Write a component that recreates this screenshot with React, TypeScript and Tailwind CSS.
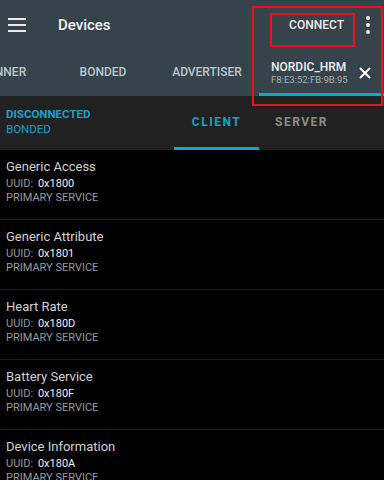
import { X } from "lucide-react";

const services = [
  { name: "Generic Access", uuid: "0x1800" },
  { name: "Generic Attribute", uuid: "0x1801" },
  { name: "Heart Rate", uuid: "0x180D" },
  { name: "Battery Service", uuid: "0x180F" },
  { name: "Device Information", uuid: "0x180A" },
];

export default function App() {
  return (
    <div
      className="relative w-[384px] h-[480px] overflow-hidden bg-black"
      style={{ fontFamily: "Roboto, 'Noto Sans', sans-serif" }}
    >
      {/* toolbar + device tabs */}
      <div className="bg-[#36434b]">
        <div className="flex h-[50px] items-center">
          <div className="flex w-[58px] pl-[8px]">
            <div className="flex flex-col gap-[4px]">
              <span className="block h-[2px] w-[18px] bg-[#e8eaeb]" />
              <span className="block h-[2px] w-[18px] bg-[#e8eaeb]" />
              <span className="block h-[2px] w-[18px] bg-[#e8eaeb]" />
            </div>
          </div>
          <div className="flex-1 text-[15px] font-medium text-[#f2f2f2]">Devices</div>
          <div className="pr-[22px] text-[12px] font-medium text-[#eeeeee]">CONNECT</div>
          <div className="flex flex-col items-center gap-[3px] pr-[14px]">
            <span className="block h-[4px] w-[4px] rounded-full bg-[#eeeeee]" />
            <span className="block h-[4px] w-[4px] rounded-full bg-[#eeeeee]" />
            <span className="block h-[4px] w-[4px] rounded-full bg-[#eeeeee]" />
          </div>
        </div>
        <div className="flex h-[46px] overflow-hidden">
          <div className="ml-[-53px] flex">
            <div className="flex w-[104px] shrink-0 items-center justify-center pb-[2px] text-[12px] font-medium text-[#bfc6ca]">SCANNER</div>
            <div className="flex w-[104px] shrink-0 items-center justify-center pb-[2px] text-[12px] font-medium text-[#bfc6ca]">BONDED</div>
            <div className="flex w-[104px] shrink-0 items-center justify-center pb-[2px] text-[12px] font-medium text-[#bfc6ca]">ADVERTISER</div>
          </div>
          <div className="flex w-[125px] shrink-0 flex-col border-b-[3px] border-[#11a6cf]">
            <div className="flex flex-1 items-center pl-[12px] pr-[10px] pt-[2px]">
              <div className="flex-1 leading-none">
                <div className="text-[12px] font-medium text-[#f0f0f0]">NORDIC_HRM</div>
                <div className="mt-[2px] text-[9.5px] text-[#a9b0b4]">F8:E3:52:FB:9B:95</div>
              </div>
              <X className="h-[18px] w-[18px] text-white" strokeWidth={2.5} />
            </div>
          </div>
        </div>
      </div>

      {/* connection + client/server */}
      <div className="flex h-[54px] bg-[#212121]">
        <div className="flex w-[174px] flex-col justify-center pl-[6px] pb-[3px] leading-[15px]">
          <div className="text-[11.5px] font-bold text-[#1aa0c6]">DISCONNECTED</div>
          <div className="text-[11.5px] text-[#1aa0c6]">BONDED</div>
        </div>
        <div className="flex w-[85px] items-center justify-center border-b-[3px] border-[#11a6cf] text-[12px] font-bold tracking-[1.5px] text-[#1aa0c6]">
          CLIENT
        </div>
        <div className="flex w-[85px] items-center justify-center border-b-[3px] border-transparent text-[12px] font-bold tracking-[1.5px] text-[#8c8c8c]">
          SERVER
        </div>
      </div>

      {/* services */}
      <div className="flex flex-col">
        {services.map((s) => (
          <div key={s.uuid} className="h-[70px] border-b border-[#1e1e1e] pl-[6px] pt-[8px]">
            <div className="text-[13px] leading-[18px] text-[#d2d2d2]">{s.name}</div>
            <div className="text-[11px] leading-[15px] text-[#9a9a9a]">
              UUID: <span className="ml-[2px] text-[#f0f0f0]">{s.uuid}</span>
            </div>
            <div className="text-[11px] leading-[14px] text-[#9a9a9a]">PRIMARY SERVICE</div>
          </div>
        ))}
      </div>

      {/* red highlight boxes */}
      <div className="absolute left-[252px] top-[6px] h-[100px] w-[131px] border-2 border-[#e8141c]" />
      <div className="absolute left-[270px] top-[13px] h-[34px] w-[85px] border-2 border-[#e8141c]" />
    </div>
  );
}
